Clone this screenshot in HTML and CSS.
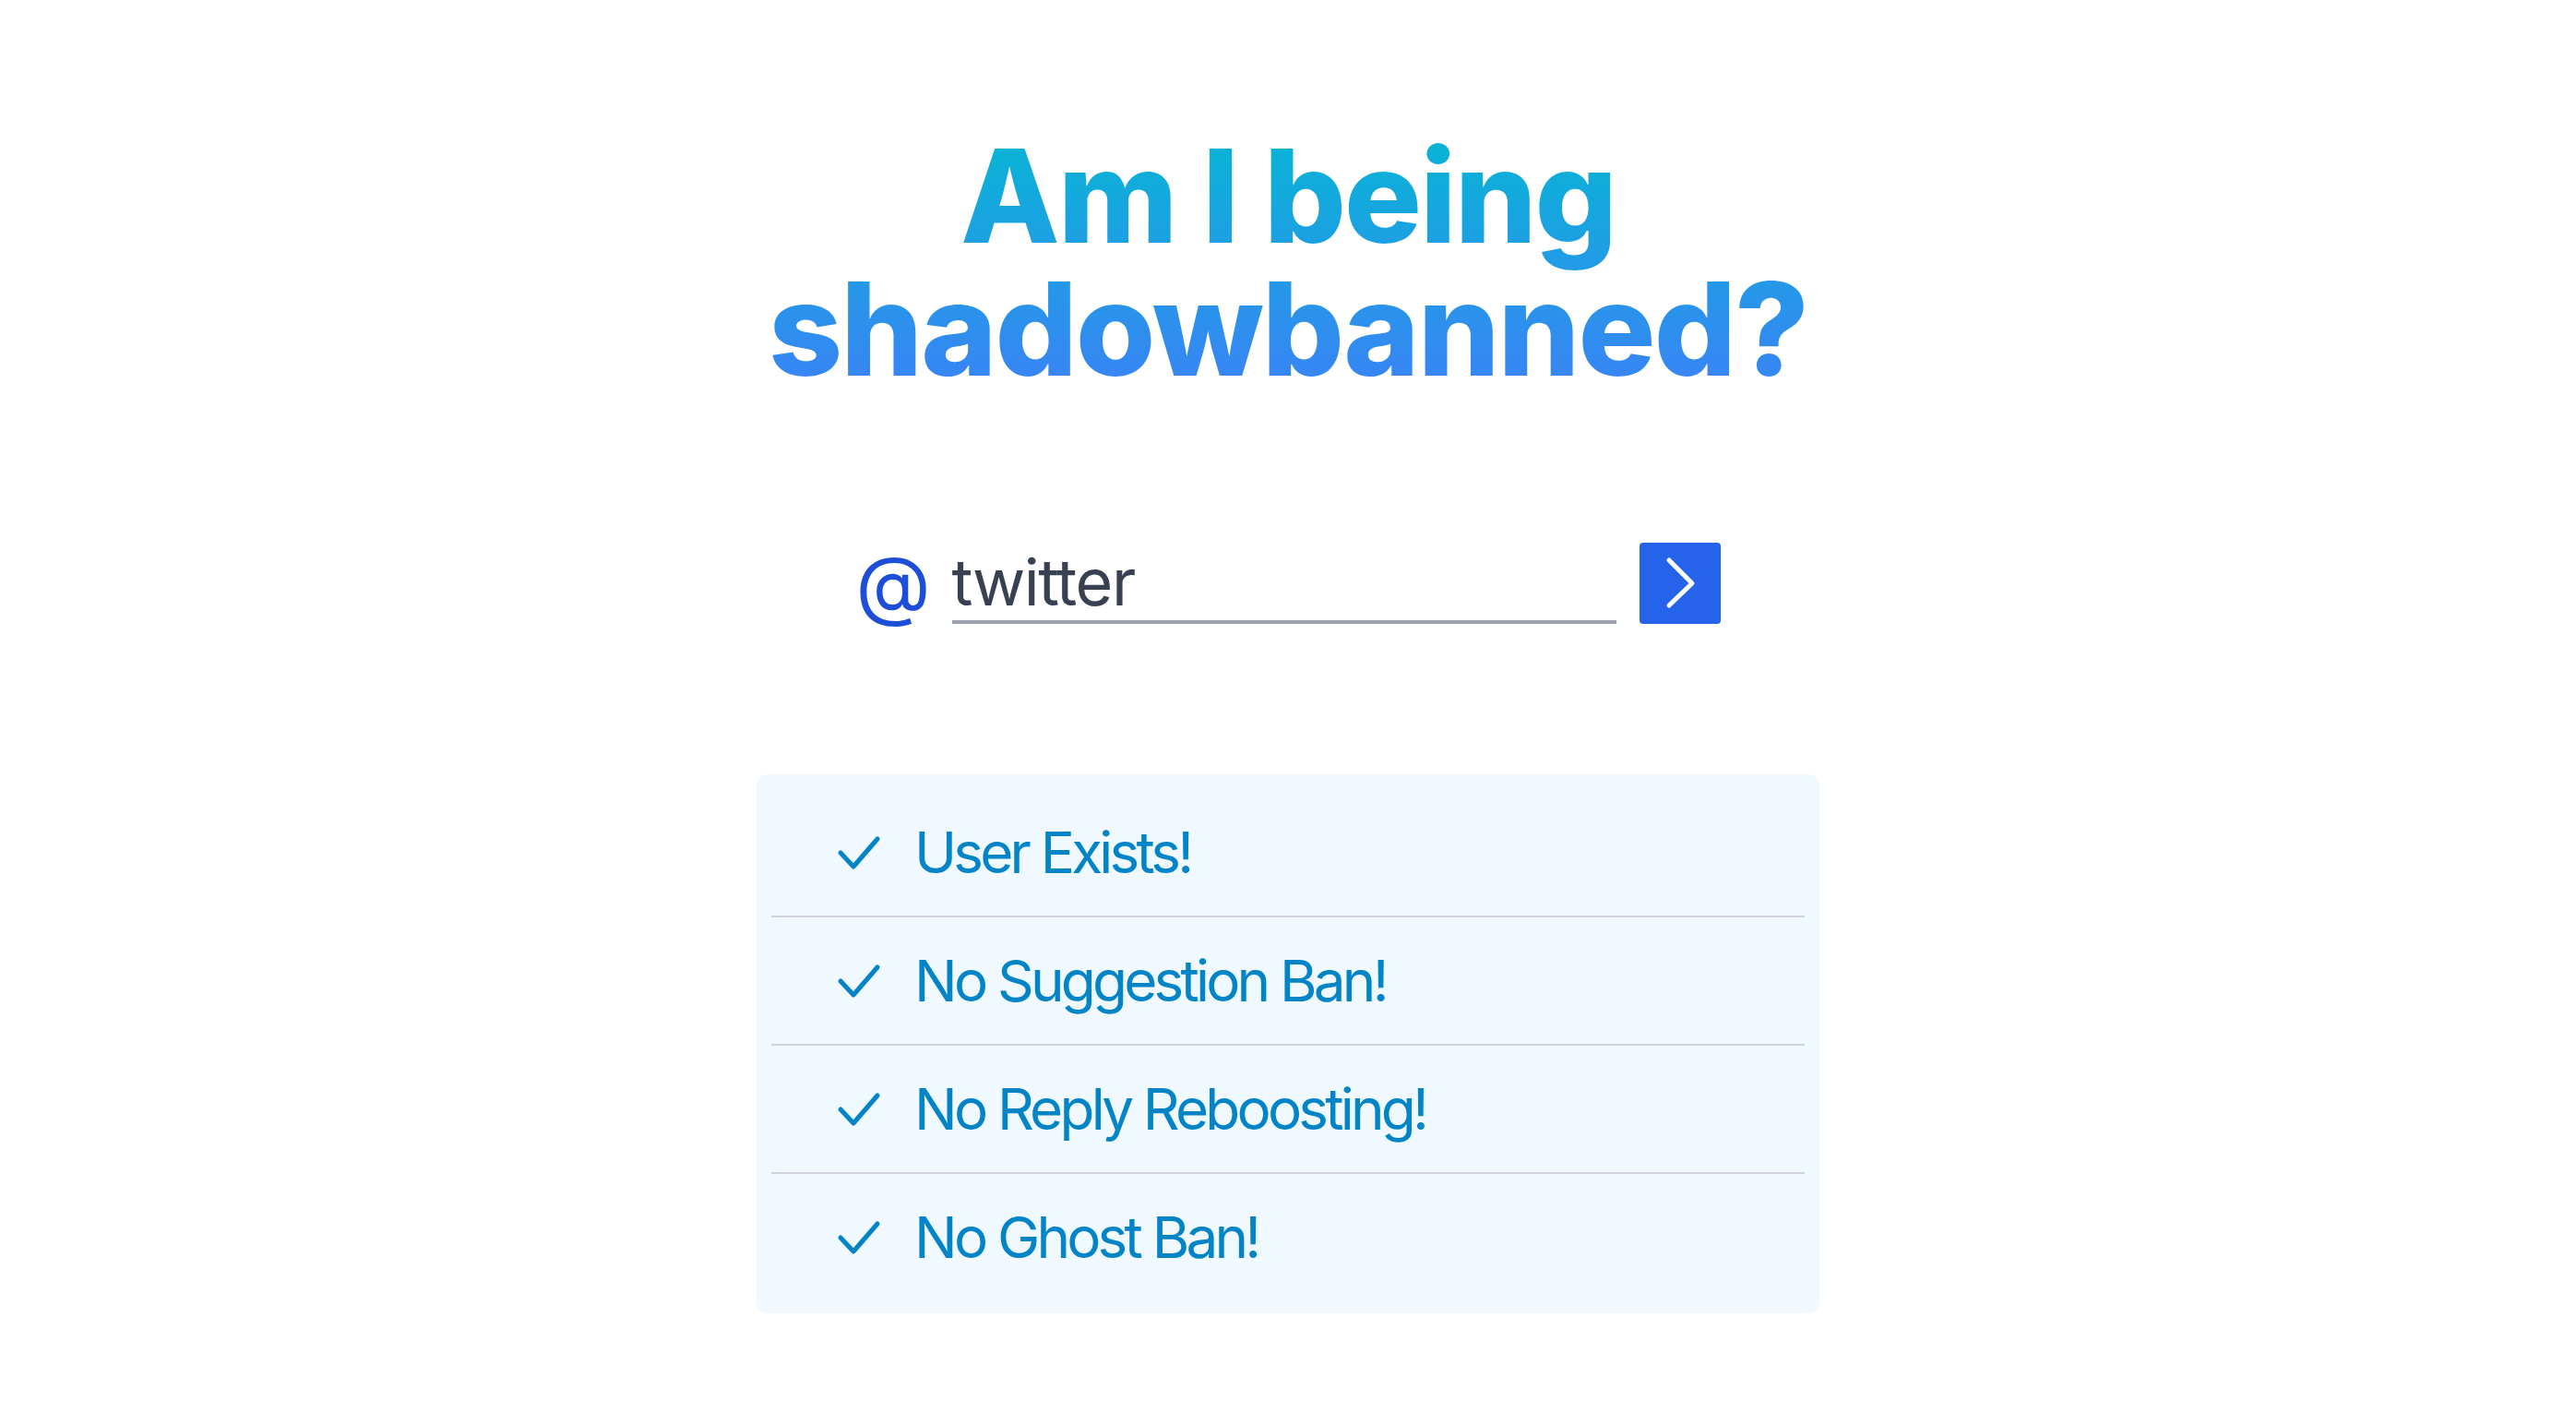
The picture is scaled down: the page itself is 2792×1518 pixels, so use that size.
FILE: index.html
```html
<!DOCTYPE html>
<html lang="en">
<head>
<meta charset="utf-8">
<title>Am I being shadowbanned?</title>
<link rel="stylesheet" href="styles.css">
</head>
<body>
<main class="page">
  <h1 class="title"><span class="title-line">Am I being</span><span class="title-line">shadowbanned?</span></h1>

  <form class="search">
    <span class="at">@</span>
    <input class="handle" type="text" value="twitter" aria-label="Twitter handle">
    <button class="go" type="button" aria-label="Check">
      <svg width="88" height="88" viewBox="0 0 88 88" fill="none"><path d="M32 19 L57 44 L32 68" stroke="#fff" stroke-width="5" stroke-linecap="round" stroke-linejoin="round"/></svg>
    </button>
  </form>

  <ul class="results">
    <li class="result"><svg class="check" width="50" height="40" viewBox="0 0 50 40" fill="none"><path d="M5 20 L19 35 L45 5" stroke="currentColor" stroke-width="5" stroke-linecap="round" stroke-linejoin="round"/></svg><span>User Exists!</span></li>
    <li class="result"><svg class="check" width="50" height="40" viewBox="0 0 50 40" fill="none"><path d="M5 20 L19 35 L45 5" stroke="currentColor" stroke-width="5" stroke-linecap="round" stroke-linejoin="round"/></svg><span>No Suggestion Ban!</span></li>
    <li class="result"><svg class="check" width="50" height="40" viewBox="0 0 50 40" fill="none"><path d="M5 20 L19 35 L45 5" stroke="currentColor" stroke-width="5" stroke-linecap="round" stroke-linejoin="round"/></svg><span>No Reply Reboosting!</span></li>
    <li class="result"><svg class="check" width="50" height="40" viewBox="0 0 50 40" fill="none"><path d="M5 20 L19 35 L45 5" stroke="currentColor" stroke-width="5" stroke-linecap="round" stroke-linejoin="round"/></svg><span>No Ghost Ban!</span></li>
  </ul>
</main>
</body>
</html>
```

FILE: styles.css
```css
* { box-sizing: border-box; }

html, body {
  margin: 0;
  padding: 0;
  background: #ffffff;
}

body {
  font-family: Inter, "Noto Sans", "Liberation Sans", sans-serif;
}

.page {
  display: flex;
  flex-direction: column;
  align-items: center;
  padding-top: 140px;
}

.title {
  margin: 0;
  display: flex;
  flex-direction: column;
  align-items: center;
  font-size: 140px;
  line-height: 144px;
  font-weight: 800;
  letter-spacing: -2px;
  text-align: center;
  background: linear-gradient(to bottom, #06b6d4, #3b82f6);
  -webkit-background-clip: text;
  background-clip: text;
  color: transparent;
}

.title-line {
  display: block;
}

.search {
  margin: 160px 0 0;
  display: flex;
  align-items: flex-start;
  height: 88px;
}

.at {
  width: 77px;
  margin-right: 27px;
  margin-top: -3px;
  font-size: 84px;
  line-height: 96px;
  color: #1d4ed8;
  text-align: center;
}

.handle {
  width: 720px;
  height: 88px;
  margin-right: 25px;
  padding: 0;
  border: 0;
  border-bottom: 4px solid #9ca3af;
  background: transparent;
  font-family: inherit;
  font-size: 70px;
  letter-spacing: -1.5px;
  color: #374151;
  outline: none;
}

.go {
  width: 88px;
  height: 88px;
  padding: 0;
  border: 0;
  border-radius: 4px;
  background: #2563eb;
  display: flex;
  align-items: center;
  justify-content: center;
}

.results {
  list-style: none;
  margin: 163px 0 0;
  padding: 16px 16px 14px;
  width: 1152px;
  background: #f0f9ff;
  border-radius: 12px;
}

.result {
  box-sizing: content-box;
  display: flex;
  align-items: center;
  gap: 35px;
  height: 137px;
  padding-left: 70px;
  color: #0284c7;
  font-size: 62px;
  letter-spacing: -3.8px;
  border-top: 2px solid #d1d5db;
}

.result:first-child {
  border-top: 0;
}

.check {
  flex: none;
  color: #0284c7;
}
```
